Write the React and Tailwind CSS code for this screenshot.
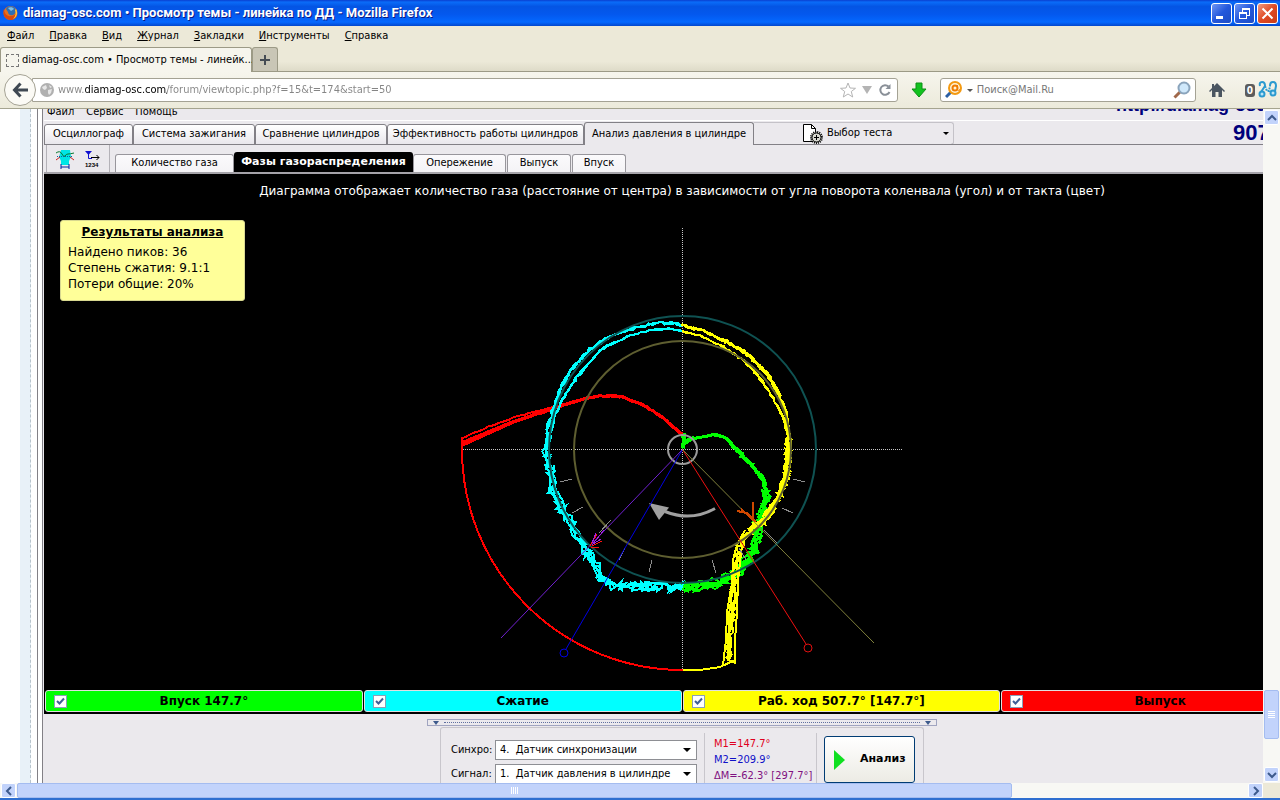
import React, { useState } from 'react'

const MENU = ['Файл', 'Правка', 'Вид', 'Журнал', 'Закладки', 'Инструменты', 'Справка']

const TABS = [
  { label: 'Осциллограф', width: 'w-[89px]' },
  { label: 'Система зажигания', width: 'w-[122px]' },
  { label: 'Сравнение цилиндров', width: 'w-[132px]' },
  { label: 'Эффективность работы цилиндров', width: 'w-[197px]' },
]

const SUBTABS = [
  { label: 'Количество газа', width: 'w-[119px]' },
  { label: 'Фазы газораспределения', width: 'w-[179px]', active: true },
  { label: 'Опережение', width: 'w-[93px]' },
  { label: 'Выпуск', width: 'w-[64px]' },
  { label: 'Впуск', width: 'w-[54px]' },
]

const STROKES = [
  { label: 'Впуск 147.7°', color: 'bg-[#00ff00]' },
  { label: 'Сжатие', color: 'bg-[#00ffff]' },
  { label: 'Раб. ход 507.7° [147.7°]', color: 'bg-[#ffff00]' },
  { label: 'Выпуск', color: 'bg-[#ff0000]' },
]

const CYAN_OUTER = [[682, 325], [670, 323], [657, 323], [640, 326], [622, 332], [606, 339], [590, 349], [573, 368], [562, 386], [554, 405], [548, 427], [546, 450]]
const CYAN_INNER = [[682, 331], [668, 329], [657, 329], [630, 335], [600, 350], [577, 377], [564, 397], [555, 414], [550, 437], [547, 450]]
const CYAN_LOWER = [[546, 450], [549, 465], [553, 490], [567, 520], [583, 543], [592, 560], [600, 577], [610, 584], [622, 587], [640, 586], [660, 587], [682, 587]]
const YELLOW_OUTER = [[682, 325], [703, 331], [730, 343], [747, 354], [767, 373], [778, 392], [786, 413], [789, 440]]
const YELLOW_INNER = [[682, 331], [700, 336], [720, 345], [742, 359], [758, 375], [773, 398], [784, 420], [789, 440]]
const YELLOW_RIGHT = [[789, 440], [788, 460], [785, 480], [777, 502], [763, 521], [750, 528]]
const YELLOW_DROP = [[754, 526], [744, 538], [737, 557], [734, 580], [733, 613], [730, 640], [729, 660]]
const GREEN_INNER = [[683, 449], [684, 434], [685, 443], [692, 438], [700, 438], [713, 435], [725, 437], [737, 450], [750, 463], [762, 477], [766, 491]]
const GREEN_LOWER = [[766, 491], [765, 507], [758, 525], [756, 543], [748, 560], [738, 572], [723, 580], [707, 585], [690, 587], [682, 587]]
const RED_LOWER = [[682, 434], [673, 427], [663, 418], [653, 411], [643, 405], [633, 401], [623, 397], [613, 396], [600, 396], [587, 398], [570, 403], [553, 409], [533, 415], [513, 422], [488, 433], [462, 445]]
const RED_UPPER = [[587, 398], [570, 402], [553, 407], [533, 412], [513, 418], [488, 427], [462, 438]]

const TICKS = [
  [560, 482, 572, 479], [572, 513, 583, 507], [599, 533, 611, 520], [619, 560, 625, 548],
  [649, 572, 652, 560], [712, 560, 716, 573], [739, 548, 746, 560], [764, 530, 777, 543],
  [782, 508, 793, 513], [793, 479, 805, 482],
]

// small deterministic generator so the traces look the same on each render
const random = (seed) => () => {
  seed = (seed * 16807) % 2147483647
  return seed / 2147483647 - 0.5
}

const noisy = (points, amp, seed) => {
  const next = random(seed * 7919)
  const out = []
  for (let i = 0; i < points.length - 1; i++) {
    const [x1, y1] = points[i]
    const [x2, y2] = points[i + 1]
    const steps = Math.max(1, Math.round(Math.hypot(x2 - x1, y2 - y1) / 4))
    for (let s = 0; s < steps; s++) {
      const t = s / steps
      out.push(`${(x1 + (x2 - x1) * t + next() * amp).toFixed(1)},${(y1 + (y2 - y1) * t + next() * amp).toFixed(1)}`)
    }
  }
  out.push(points[points.length - 1].join(','))
  return out.join(' ')
}

const Trace = ({ points, amp = 1, count = 1, color, width = 2 }) =>
  Array.from({ length: count }, (_, i) => (
    <polyline key={i} points={noisy(points, amp, i * 31 + points.length)} fill="none" stroke={color} strokeWidth={width} />
  ))

const PhaseChart = () => (
  <svg viewBox="442 220 480 460" className="w-[480px] h-[460px] shrink-0" shapeRendering="crispEdges">
    <g stroke="#c8c8c8" strokeDasharray="1 1">
      <line x1="682.5" y1="228" x2="682.5" y2="670" />
      <line x1="461" y1="449.5" x2="903" y2="449.5" />
    </g>

    <Trace points={RED_LOWER} color="#ff0000" count={2} amp={1} width={3} />
    <path d="M553 408L513 420L462 441V447L513 424L553 410Z" fill="#ff0000" />
    <Trace points={RED_UPPER} color="#ff0000" />
    <path d="M462 437V450A220.500 220.500 0 0 0 682.500 670" fill="none" stroke="#ff0000" strokeWidth="2" />

    <Trace points={GREEN_INNER} color="#00ff00" count={2} amp={2} width={3} />
    <Trace points={[[725, 437], [737, 450], [750, 463], [762, 477], [768, 491]]} color="#00ff00" count={3} amp={4} />
    <Trace points={GREEN_LOWER} color="#00ff00" count={5} amp={11} />

    <Trace points={CYAN_OUTER} color="#00ffff" count={3} amp={3} />
    <Trace points={CYAN_INNER} color="#00ffff" count={2} amp={2} />
    <Trace points={CYAN_LOWER} color="#00ffff" count={4} amp={10} />

    <Trace points={YELLOW_OUTER} color="#ffff00" count={4} amp={3} />
    <Trace points={YELLOW_INNER} color="#ffff00" count={2} amp={2} />
    <Trace points={YELLOW_RIGHT} color="#ffff00" count={6} amp={7} />
    <Trace points={YELLOW_DROP} color="#ffff00" count={3} amp={7} />
    <path d="M745 530L737 545L733 560L732 583L727 612L726 640L723 665M742 545L738 580L737 612L735 640L735 663L728 660L729 615L734 580" fill="none" stroke="#ffff00" strokeWidth="2" />
    <path d="M682.500 670H700L720 667L735 660" fill="none" stroke="#ffff00" strokeWidth="2" />

    <g shapeRendering="auto" fill="none">
      <circle cx="682.5" cy="449.5" r="133.5" stroke="#0f5252" strokeWidth="2" />
      <circle cx="682.5" cy="449.5" r="108.5" stroke="#5e5e30" strokeWidth="2" />
      <circle cx="682.5" cy="449.5" r="14.5" stroke="#9a9a9a" strokeWidth="2" />
      <path d="M715 508.500Q691 522 665 511.500" stroke="#a0a0a0" strokeWidth="3" />
      <path d="M649 503L669 507.500L659 520Z" fill="#a0a0a0" />
    </g>

    <g stroke="#8c8c8c">
      {TICKS.map(([x1, y1, x2, y2]) => (
        <line key={`${x1}-${y1}`} x1={x1} y1={y1} x2={x2} y2={y2} />
      ))}
    </g>

    <g fill="none" shapeRendering="auto">
      <path d="M682.500 449.500L501 638" stroke="#7020d0" />
      <path d="M682.500 449.500L566 649" stroke="#0000e0" />
      <circle cx="564" cy="653" r="4" stroke="#0000e0" />
      <path d="M682.500 449.500L806 644" stroke="#f01010" />
      <circle cx="808" cy="648" r="4" stroke="#e01010" />
      <path d="M682.500 449.500L874 643" stroke="#80803c" />
    </g>
    <g fill="none">
      <path d="M590 546L597 534M592 546L602 541M591 547L599 547" stroke="#ff1010" />
      <path d="M592 545L604 530M593 544L601 539M592 543L596 533" stroke="#a020e0" />
      <path d="M753 502V520M737 511L747 513L756 522M741 509L753 520" stroke="#d04800" strokeWidth="2" />
    </g>
  </svg>
)

const Chevron = ({ d }) => (
  <svg viewBox="0 0 10 10" className="w-[10px] h-[10px]" fill="none" stroke="#3d5a8c" strokeWidth="2">
    <path d={d} />
  </svg>
)

const ScrollButton = ({ label, d }) => (
  <button
    type="button"
    aria-label={label}
    className="flex h-[15px] w-[15px] shrink-0 items-center justify-center rounded-xs border border-white bg-[#c2d3fb]"
  >
    <Chevron d={d} />
  </button>
)

const SelectRow = ({ id, label, value }) => (
  <div className="flex h-[20px] items-center">
    <label htmlFor={id} className="w-[44px]">{label}</label>
    <div className="relative">
      <select id={id} className="h-[20px] w-[202px] appearance-none border border-[#8e8f94] bg-white pl-1 text-[11px]">
        <option>{value}</option>
      </select>
      <svg viewBox="0 0 8 4" className="pointer-events-none absolute top-2 right-[6px] h-1 w-2">
        <path d="M0 0H8L4 4Z" />
      </svg>
    </div>
  </div>
)

const StrokeToggle = ({ label, color }) => {
  const [checked, setChecked] = useState(true)
  return (
    <label className={`relative flex h-[22px] flex-1 items-center justify-center rounded-[3px] border border-[#e0e0e0] text-[12px] font-bold ${color}`}>
      <input
        type="checkbox"
        checked={checked}
        onChange={() => setChecked(!checked)}
        className="absolute left-2 h-[13px] w-[13px] appearance-none border border-[#8aa0b8] bg-white"
      />
      {checked && (
        <svg viewBox="0 0 13 13" className="pointer-events-none absolute left-2 h-[13px] w-[13px]" fill="none" stroke="#3f5f96" strokeWidth="2">
          <path d="M3 6L5.500 8.500L10 3.500" />
        </svg>
      )}
      <span>{label}</span>
    </label>
  )
}

const TitleBar = () => (
  <header className="flex h-[26px] shrink-0 items-center bg-[linear-gradient(#0a3fd0,#0a6cf8_8%,#0455e4_25%,#0458ee_55%,#0468ff_85%,#0347cc)] pl-[3px] pr-[2px]">
    <svg viewBox="0 0 16 16" className="mr-1 h-4 w-4">
      <circle cx="7.500" cy="8" r="7" fill="#e8701c" />
      <path d="M3 4C4 1 9 0 12 3C14 5 13 9 10 10C7 11 5 9 5 7Z" fill="#2f6fb4" />
      <path d="M5 3C7 1.500 10 2 11 4L8 6Z" fill="#7fc0e8" />
      <path d="M1 4C1 8 4 12 8 11C11 11 13 9 13 6C15 9 13 15 7.500 15C2 15-1 9 1 4Z" fill="#d9480f" />
      <path d="M13 4C15 8 14 12 10 14C13 11 13 8 12 5Z" fill="#ffc93c" />
    </svg>
    <h1 className="flex-1 whitespace-nowrap font-[Roboto,sans-serif] text-[13px] font-bold text-white [text-shadow:1px_1px_#0a1883]">
      diamag-osc.com • Просмотр темы - линейка по ДД - Mozilla Firefox
    </h1>
    <div className="flex gap-[2px]">
      <button type="button" aria-label="Свернуть" className="h-[21px] w-[21px] rounded-[3px] border border-white bg-[linear-gradient(135deg,#6f96f4,#2357dc_50%,#1d4cc4)]">
        <svg viewBox="0 0 19 19"><path d="M4 12H11V15H4Z" fill="#fff" /></svg>
      </button>
      <button type="button" aria-label="Восстановить" className="h-[21px] w-[21px] rounded-[3px] border border-white bg-[linear-gradient(135deg,#6f96f4,#2357dc_50%,#1d4cc4)]">
        <svg viewBox="0 0 19 19" fill="none" stroke="#fff" shapeRendering="crispEdges"><path d="M4.500 8.500H11.500V14.500H4.500ZM4.500 9.500H11.500M7.500 8V4.500H14.500V11.500H12M7.500 5.500H14.500" /></svg>
      </button>
      <button type="button" aria-label="Закрыть" className="h-[21px] w-[21px] rounded-[3px] border border-white bg-[linear-gradient(135deg,#f09a80,#e04a24_50%,#c83c18)]">
        <svg viewBox="0 0 19 19" stroke="#fff" strokeWidth="2"><path d="M4.500 4.500L14.500 14.500M14.500 4.500L4.500 14.500" /></svg>
      </button>
    </div>
  </header>
)

const BrowserTabs = () => (
  <div className="flex h-[25px] shrink-0 items-end border-b border-[#9c9a86] bg-[linear-gradient(#ece9d8_60%,#dedbc8)]">
    <div className="-mb-px flex h-[25px] w-[252px] items-center rounded-t-[3px] border border-b-0 border-[#9c9a86] bg-[#f6f5ed] pl-[5px]">
      <span className="mr-[3px] h-[13px] w-[13px] shrink-0 border border-dashed border-[#777]" />
      <span className="whitespace-nowrap">diamag-osc.com • Просмотр темы - линейк...</span>
    </div>
    <button type="button" aria-label="Новая вкладка" className="flex h-[24px] w-[26px] items-center justify-center rounded-t-[3px] border border-b-0 border-[#9c9a86] bg-[#c9c6b6]">
      <svg viewBox="0 0 10 10" className="h-[10px] w-[10px]" stroke="#454c54" strokeWidth="2"><path d="M5 0V10M0 5H10" /></svg>
    </button>
  </div>
)

const NavBar = () => (
  <div className="flex h-[37px] shrink-0 items-center border-b border-[#a5a48f] bg-[linear-gradient(#f6f5ed,#eceadb)] pl-1 pr-[2px]">
    <button type="button" aria-label="Назад" className="z-10 flex h-8 w-8 shrink-0 items-center justify-center rounded-full border border-[#a4a294] bg-[#fbfaf5]">
      <svg viewBox="0 0 16 16" className="h-4 w-4" fill="none" stroke="#3f4852" strokeWidth="3"><path d="M8.500 1.500L2.500 8L8.500 14.500M3 8H16" /></svg>
    </button>
    <div className="-ml-1 flex h-[24px] flex-1 items-center rounded-r-[3px] border border-[#a4a294] bg-white pl-[7px] pr-[5px]">
      <svg viewBox="0 0 14 14" className="mr-1 h-[14px] w-[14px] shrink-0">
        <circle cx="7" cy="7" r="7" fill="#b0b0b0" />
        <path d="M2 4L6 2L7 5L5 7L3 6ZM8 7L12 6L11 10L9 12L8 10ZM9 2L12 4L10 5Z" fill="#e6e6e6" />
      </svg>
      <input
        type="text"
        aria-label="Адрес"
        defaultValue="www.diamag-osc.com/forum/viewtopic.php?f=15&t=174&start=50"
        className="min-w-0 flex-1 bg-[linear-gradient(90deg,#858585_27px,#000_27px,#000_109px,#858585_109px)] bg-clip-text text-[11px] text-transparent outline-none"
      />
      <svg viewBox="0 0 16 16" className="h-4 w-4" fill="none" stroke="#b4b4b4"><path d="M8 1L10 6L15.500 6.300L11.300 9.500L12.700 15L8 12L3.300 15L4.700 9.500L0.500 6.300L6 6Z" /></svg>
      <svg viewBox="0 0 10 8" className="ml-[6px] h-2 w-[10px]"><path d="M0 0H10L5 8Z" fill="#b4b4b4" /></svg>
      <svg viewBox="0 0 14 14" className="ml-[6px] h-[14px] w-[14px]" fill="none" stroke="#8a9098" strokeWidth="2"><path d="M10.500 3.500A4.800 4.800 0 1 0 11.500 9" /><path d="M12.500 1V6H7.500Z" fill="#8a9098" stroke="none" /></svg>
    </div>
    <svg viewBox="0 0 16 16" className="ml-[13px] h-4 w-4"><path d="M5 1H11V7H15L8 15L1 7H5Z" fill="#12c21e" stroke="#0a8f14" /></svg>
    <div className="ml-[13px] flex h-[24px] w-[256px] items-center rounded-[3px] border border-[#a4a294] bg-white px-1">
      <svg viewBox="0 0 18 18" className="h-[18px] w-[18px]" fill="none">
        <path d="M1 16L6 11" stroke="#2b5fa4" strokeWidth="3" />
        <circle cx="10" cy="7" r="6" stroke="#f39a12" strokeWidth="2" fill="#fff3d6" />
        <circle cx="10" cy="7" r="2.500" stroke="#f07c00" strokeWidth="2" />
        <path d="M12.500 4V8.500Q13.500 10.500 15 8.500" stroke="#f07c00" />
      </svg>
      <svg viewBox="0 0 6 3" className="mx-1 h-[3px] w-[6px] shrink-0"><path d="M0 0H6L3 3Z" fill="#555" /></svg>
      <input type="text" aria-label="Поиск" placeholder="Поиск@Mail.Ru" className="min-w-0 flex-1 text-[11px] outline-none placeholder:text-[#777]" />
      <svg viewBox="0 0 18 18" className="h-[18px] w-[18px]" fill="none">
        <path d="M1.500 16.500L7 11" stroke="#a0684a" strokeWidth="3" />
        <circle cx="11" cy="7" r="5.500" fill="#cfe8fb" stroke="#8aa4bc" strokeWidth="2" />
      </svg>
    </div>
    <svg viewBox="0 0 16 16" className="ml-[13px] h-4 w-4"><path d="M8 1L16 9L15 10L13 8V15H9.500V10H6.500V15H3V8L1 10L0 9L3 6V2H5V4Z" fill="#4a5560" /></svg>
    <span className="ml-5 rounded-[3px] bg-[#5c5c5c] px-[2px] text-[10px] leading-[13px] font-bold text-white">0</span>
    <svg viewBox="0 0 20 18" className="ml-[3px] h-[18px] w-5" fill="none" stroke="#2b9ad0" strokeWidth="2">
      <path d="M2 5Q1 1 4 1T7 5L3 11M12 5Q12 1 15 1T18 5L17 10" />
      <path d="M7 5L9 10H11L12 5" strokeDasharray="2 1" />
      <circle cx="4" cy="13" r="2.500" fill="#bfe4f6" />
      <circle cx="15" cy="12" r="2.500" fill="#bfe4f6" />
    </svg>
  </div>
)

const AppTabs = () => (
  <div className="flex h-[25px] shrink-0 items-end border-t border-white [box-shadow:inset_0_-1px_#828086]">
    {TABS.map((tab) => (
      <button
        key={tab.label}
        type="button"
        className={`h-[21px] whitespace-nowrap rounded-t-[3px] border border-[#828086] bg-[linear-gradient(#ffffff,#e9e7ec)] ${tab.width}`}
      >
        {tab.label}
      </button>
    ))}
    <button type="button" className="h-[23px] w-[170px] whitespace-nowrap rounded-t-[3px] border border-b-0 border-[#828086] bg-[#ebe9ed]">
      Анализ давления в цилиндре
    </button>
    <button type="button" className="flex h-[23px] w-[200px] items-center rounded-r-[3px] border border-l-0 border-[#c4c2c8] border-b-[#828086] pl-[48px] pr-1">
      <svg viewBox="0 0 22 22" className="mr-[3px] h-[22px] w-[22px]" fill="none" stroke="#000">
        <path d="M1.500 1.500H9.500L13.500 5.500V18.500H1.500Z" fill="#fff" />
        <path d="M9.500 1.500V5.500H13.500" />
        <circle cx="14.500" cy="14.500" r="5.500" fill="#d8d8d0" strokeWidth="2" strokeDasharray="1 1" />
        <circle cx="14.500" cy="14.500" r="4.500" fill="#d8d8d0" strokeWidth="1" />
        <path d="M14.500 12V17M12 14.500H17" />
      </svg>
      <span className="flex-1 text-left">Выбор теста</span>
      <svg viewBox="0 0 6 3" className="h-[3px] w-[6px]"><path d="M0 0H6L3 3Z" /></svg>
    </button>
    <p className="ml-[279px] font-['Liberation_Sans',sans-serif] text-[22px] leading-[24px] font-bold text-[#00007c]">907</p>
  </div>
)

const AppSubtabs = () => (
  <div className="flex h-[29px] shrink-0 items-end border-b-2 border-[#a5a3a9] pl-[2px]">
    <div className="flex h-[27px] w-[64px] items-center gap-[10px] self-start border-x border-[#b4b2b8] pl-2">
      <svg viewBox="0 0 20 20" className="h-5 w-5" fill="none">
        <path d="M6 1H15L16 8L14 12V16H6V12L4 8Z" fill="#00e5e5" />
        <path d="M1 4Q5 1 7 5T10 7T13 5T19 4" stroke="#087830" />
        <path d="M1 11L5 8M15 8L19 11" stroke="#d02020" />
        <path d="M2 7.500H18" stroke="#1060a0" strokeDasharray="1 1" />
        <path d="M6 15V20M14 15V20M6 18H14" stroke="#0020a0" />
      </svg>
      <svg viewBox="0 0 16 18" className="h-[18px] w-4" fill="none">
        <path d="M0 1H7L3.500 5Z" fill="#1010d0" />
        <path d="M3.500 4V8.500H7" stroke="#1010d0" />
        <path d="M6 7.500H14M11.500 5L14 7.500L11.500 10" stroke="#000" />
        <text x="0" y="17" fontSize="6" fontWeight="bold" fill="#000" className="font-['Liberation_Sans']">1234</text>
      </svg>
    </div>
    <div className="ml-[5px] flex items-end gap-px">
      {SUBTABS.map((tab) => (
        <button
          key={tab.label}
          type="button"
          className={
            tab.active
              ? `-mx-px h-[20px] whitespace-nowrap rounded-t-[3px] bg-black font-['DejaVu_Sans',sans-serif] font-bold text-white ${tab.width}`
              : `h-[18px] whitespace-nowrap rounded-t-[3px] border border-b-0 border-[#98969c] bg-[linear-gradient(#fbfafc,#f4f3f6)] ${tab.width}`
          }
        >
          {tab.label}
        </button>
      ))}
    </div>
  </div>
)

const ControlPanel = () => (
  <footer className="flex flex-1 flex-col items-center bg-[#ebe9ed] pt-[5px]">
    <div className="flex h-[7px] w-[510px] shrink-0 items-center gap-1 border border-[#a0a4c0] px-1">
      <svg viewBox="0 0 8 4" className="h-1 w-2"><path d="M1 0H7L4 4Z" fill="#3d5a8c" /></svg>
      <span className="h-px flex-1 border-t border-dotted border-[#6070a0]" />
      <svg viewBox="0 0 8 4" className="h-1 w-2"><path d="M1 0H7L4 4Z" fill="#3d5a8c" /></svg>
    </div>
    <div className="mt-px flex h-[70px] w-[484px] shrink-0 rounded-t-[3px] border border-b-0 border-[#c8c6cc] pl-[10px]">
      <div className="flex flex-col gap-1 pt-3">
        <SelectRow id="sync" label="Синхро:" value={'4.\u00a0 Датчик синхронизации'} />
        <SelectRow id="signal" label="Сигнал:" value={'1.\u00a0 Датчик давления в цилиндре'} />
      </div>
      <div className="mt-[5px] ml-[7px] w-[113px] border-x border-[#c8c6cc] pt-[3px] pl-[9px] leading-4">
        <p className="text-[#e00020]">M1=147.7°</p>
        <p className="text-[#1010c8]">M2=209.9°</p>
        <p className="whitespace-nowrap text-[#801080]">ΔM=-62.3° [297.7°]</p>
      </div>
      <button
        type="button"
        className="mt-2 ml-[7px] flex h-[47px] w-[91px] items-center rounded-[3px] border border-[#003c74] bg-[linear-gradient(#ffffff,#ecebe4)] pl-[9px] font-['DejaVu_Sans',sans-serif] font-bold"
      >
        <svg viewBox="0 0 11 20" className="mr-[15px] h-5 w-[11px]"><path d="M0 0L11 10L0 20Z" fill="#10e020" /></svg>
        Анализ
      </button>
    </div>
  </footer>
)

const AnalyzerApp = () => (
  <main className="flex h-full w-[calc(100%+57px)] flex-col border-l border-[#828086] bg-[#ebe9ed] pl-px">
    <div className="flex h-[11px] shrink-0 items-end justify-between overflow-hidden pr-3 pl-[3px]">
      <div className="flex gap-3 leading-4">
        <button type="button">Файл</button>
        <button type="button">Сервис</button>
        <button type="button">Помощь</button>
      </div>
      <a href="http://diamag-osc.com" className="font-['Liberation_Sans',sans-serif] text-[18px] leading-[30px] font-bold text-[#00007c]">http://diamag-osc.com</a>
    </div>
    <AppTabs />
    <AppSubtabs />
    <section className="relative flex shrink-0 flex-col items-center bg-black font-['DejaVu_Sans',sans-serif]">
      <p className="h-[46px] pt-2 text-[12px] leading-[18px] whitespace-nowrap text-white">
        Диаграмма отображает количество газа (расстояние от центра) в зависимости от угла поворота коленвала (угол) и от такта (цвет)
      </p>
      <PhaseChart />
      <div className="absolute top-[46px] left-4 h-[81px] w-[185px] rounded-[3px] border border-[#d8d890] bg-[#ffff99] px-[7px] pt-[3px] text-[12px] leading-4">
        <h2 className="mb-1 text-center font-bold underline">Результаты анализа</h2>
        <p>Найдено пиков: 36</p>
        <p>Степень сжатия: 9.1:1</p>
        <p>Потери общие: 20%</p>
      </div>
      <div className="mt-[10px] mb-[2px] flex w-full gap-px px-px">
        {STROKES.map((stroke) => (
          <StrokeToggle key={stroke.label} label={stroke.label} color={stroke.color} />
        ))}
      </div>
    </section>
    <ControlPanel />
  </main>
)

export default function App() {
  return (
    <div className="flex h-screen flex-col overflow-hidden bg-white font-['DejaVu_Sans_Condensed','DejaVu_Sans',sans-serif] text-[11px] text-black">
      <TitleBar />
      <nav className="flex h-[21px] shrink-0 items-center gap-[15px] bg-[#ece9d8] pl-[7px]">
        {MENU.map((item) => (
          <button key={item} type="button" className="first-letter:underline">{item}</button>
        ))}
      </nav>
      <BrowserTabs />
      <NavBar />
      <div className="flex min-h-0 flex-1">
        <div className="ml-5 w-[11px] shrink-0 border-r border-dashed border-[#b8c4cc] bg-[#e8f1f8]" />
        <div className="ml-[6px] w-[5px] shrink-0 border-l border-[#828086]" />
        <div className="min-w-0 flex-1 overflow-hidden">
          <AnalyzerApp />
        </div>
        <div className="flex w-[17px] shrink-0 flex-col items-center bg-[#f8f8f4] py-px">
          <ScrollButton label="Вверх" d="M1 7L5 3L9 7" />
          <div className="grow-[563]" />
          <div className="flex h-[49px] w-[15px] flex-col items-center justify-center gap-px rounded-xs border border-[#a4bcf0] bg-[#c2d3fb]">
            <span className="h-px w-[7px] bg-white" />
            <span className="h-px w-[7px] bg-white" />
            <span className="h-px w-[7px] bg-white" />
            <span className="h-px w-[7px] bg-white" />
          </div>
          <div className="grow-[28]" />
          <ScrollButton label="Вниз" d="M1 3L5 7L9 3" />
        </div>
      </div>
      <div className="flex h-[17px] shrink-0 items-center border-b-2 border-[#2f6fd0] bg-[#f8f8f4] pl-px">
        <ScrollButton label="Влево" d="M7 1L3 5L7 9" />
        <div className="ml-px flex h-[15px] grow-[994] items-center justify-center gap-px rounded-xs border border-[#a4bcf0] bg-[#c2d3fb]">
          <span className="h-[7px] w-px bg-white" />
          <span className="h-[7px] w-px bg-white" />
          <span className="h-[7px] w-px bg-white" />
          <span className="h-[7px] w-px bg-white" />
        </div>
        <div className="grow-[238]" />
        <ScrollButton label="Вправо" d="M3 1L7 5L3 9" />
        <div className="h-full w-[17px] shrink-0 bg-[#ece9d8]" />
      </div>
    </div>
  )
}
